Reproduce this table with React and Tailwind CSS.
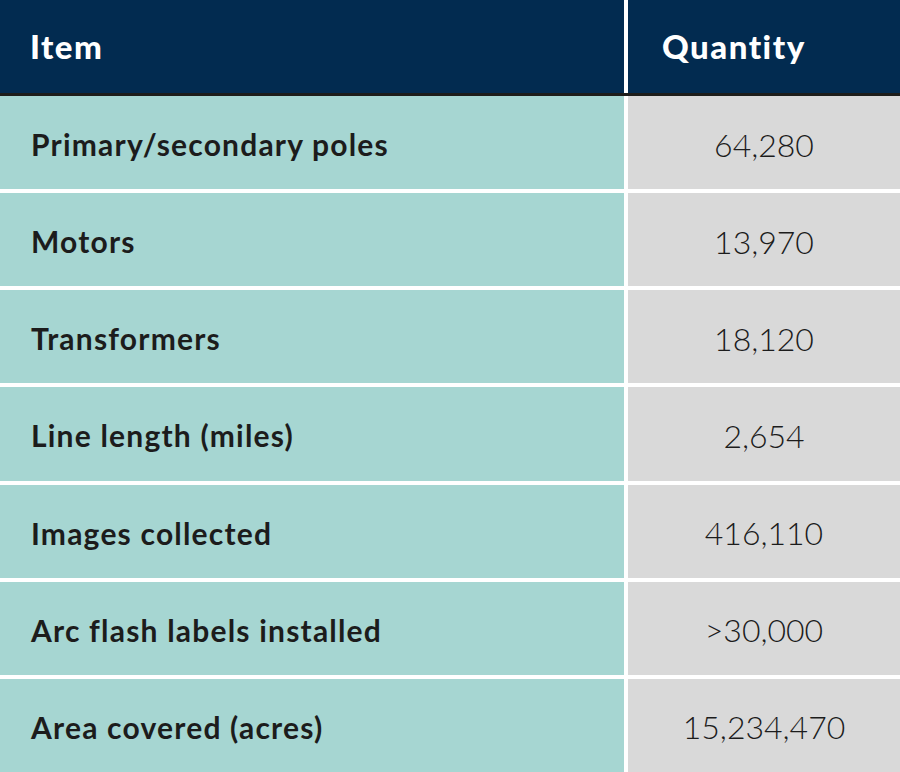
const rows = [
  { item: "Primary/secondary poles", qty: "64,280" },
  { item: "Motors", qty: "13,970" },
  { item: "Transformers", qty: "18,120" },
  { item: "Line length (miles)", qty: "2,654" },
  { item: "Images collected", qty: "416,110" },
  { item: "Arc flash labels installed", qty: ">30,000" },
  { item: "Area covered (acres)", qty: "15,234,470" },
];

export default function App() {
  return (
    <div className="flex h-[772px] w-[900px] flex-col bg-white font-['Lato','Liberation_Sans',sans-serif] text-[#1c1c1c]">
      <div className="grid h-[96px] shrink-0 grid-cols-[624px_1fr] gap-x-[4px] border-b-[3px] border-[#1d1d1b] bg-white">
        <div className="flex items-center bg-[#022b50] pl-[30px] text-[33px] font-black tracking-[1.5px] text-white">
          Item
        </div>
        <div className="flex items-center bg-[#022b50] pl-[34px] text-[33px] font-black tracking-[1.5px] text-white">
          Quantity
        </div>
      </div>
      <div className="flex flex-1 flex-col gap-y-[4px]">
        {rows.map((row) => (
          <div key={row.item} className="grid flex-1 grid-cols-[624px_1fr] gap-x-[4px]">
            <div className="flex items-center bg-[#a6d6d2] pl-[31px] pt-[4px] text-[30px] font-bold tracking-[1.2px]">
              {row.item}
            </div>
            <div className="flex items-center justify-center bg-[#d9d9d9] pt-[4px] text-[32px] font-light">
              {row.qty}
            </div>
          </div>
        ))}
      </div>
    </div>
  );
}
